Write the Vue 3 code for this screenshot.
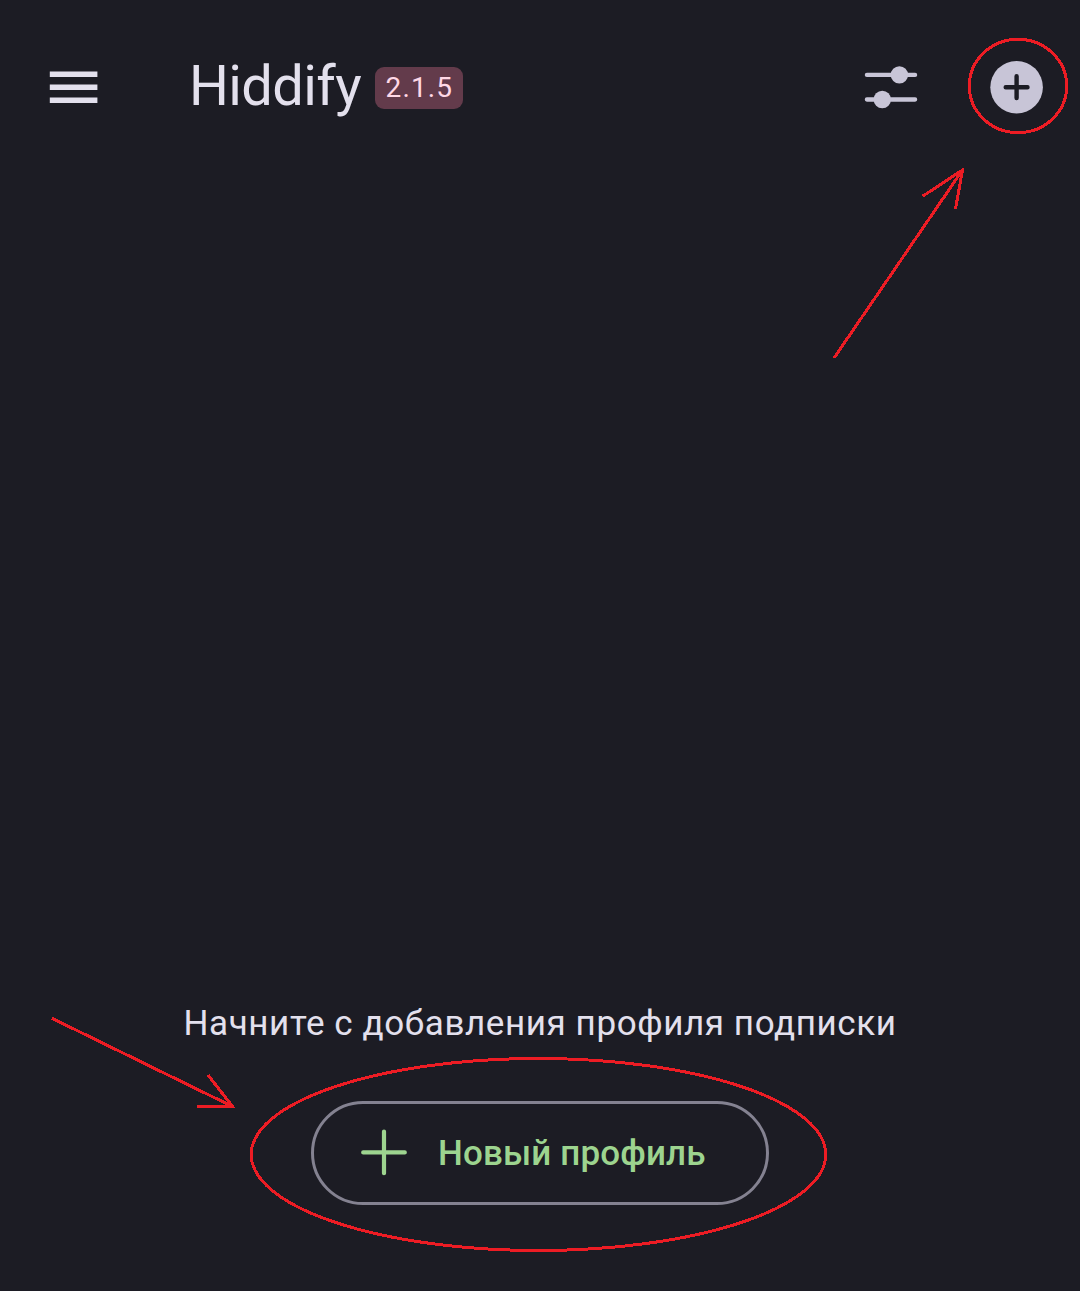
<script setup>
const appName = 'Hiddify'
const version = '2.1.5'
</script>

<template>
  <div class="screen">
    <header class="bar">
      <button class="icon-button menu" aria-label="Меню">
        <svg width="50" height="36" viewBox="0 0 50 36">
          <path d="M1.8 2.4h47.6v5.6H1.8zM1.8 15.4h47.6v5.6H1.8zM1.8 28.4h47.6v5.6H1.8z" />
        </svg>
      </button>
      <h1 class="title">{{ appName }}</h1>
      <span class="version">{{ version }}</span>
      <div class="actions">
        <button class="icon-button" aria-label="Настройки">
          <svg width="56" height="56" viewBox="0 0 56 56">
            <g stroke="currentColor" stroke-width="4.3" stroke-linecap="round">
              <path d="M3.9 15.9h48.2M3.9 40.5h48.2" />
            </g>
            <circle cx="36.4" cy="15.9" r="8.7" />
            <circle cx="19.3" cy="40.5" r="8.7" />
          </svg>
        </button>
        <button class="icon-button" aria-label="Добавить">
          <svg width="56" height="56" viewBox="0 0 56 56">
            <circle cx="27.6" cy="28.2" r="26.3" />
            <path class="cut" d="M16.7 28.2h21.8M27.6 17.3v21.8" />
          </svg>
        </button>
      </div>
    </header>

    <main class="empty">
      <p class="hint">Начните с добавления профиля подписки</p>
      <button class="new-profile">
        <svg width="48" height="48" viewBox="0 0 48 48">
          <path d="M3.2 23.4h41.6M24 2.6v41.6" />
        </svg>
        <span class="label">Новый профиль</span>
      </button>
    </main>

    <svg class="marks" width="1080" height="1291" viewBox="0 0 1080 1291">
      <ellipse cx="1018" cy="86" rx="48.7" ry="46.7" />
      <path d="M834 358L962.5 170M922.5 196.3L962.5 170L955.5 209" />
      <ellipse cx="538.5" cy="1154.5" rx="287.3" ry="96" />
      <path d="M52 1018.3L232.5 1106.5M208 1075L232.5 1106.5H197" />
    </svg>
  </div>
</template>

<style>
body {
  margin: 0;
  background: #1c1c24;
}
</style>

<style scoped>
.screen {
  position: relative;
  box-sizing: border-box;
  width: 1080px;
  height: 1291px;
  display: flex;
  flex-direction: column;
  justify-content: space-between;
  overflow: hidden;
  background: #1c1c24;
  color: #e3e0ed;
  font-family: Roboto, "Noto Sans", sans-serif;
}

button {
  margin: 0;
  padding: 0;
  border: 0;
  background: none;
  font: inherit;
}

svg {
  display: block;
}

.bar {
  display: flex;
  align-items: center;
  height: 174px;
  padding: 0 35px 0 48px;
}

.icon-button {
  color: #c8c5d7;
}

.icon-button svg {
  fill: currentColor;
}

.menu {
  color: #e3e0ed;
}

.title {
  margin: 0 0 3px 91px;
  font-size: 56px;
  font-weight: 400;
  line-height: 70px;
  letter-spacing: -0.6px;
}

.version {
  box-sizing: border-box;
  width: 88px;
  height: 42px;
  margin: 2px 0 0 14.2px;
  border-radius: 9px;
  background: #633b4b;
  color: #ffd8e6;
  font-size: 28px;
  line-height: 41px;
  letter-spacing: 1.1px;
  text-align: center;
}

.actions {
  display: flex;
  gap: 70px;
  margin-left: auto;
}

.cut {
  fill: none;
  stroke: #1c1c24;
  stroke-width: 4.4;
  stroke-linecap: round;
}

.empty {
  display: flex;
  flex-direction: column;
  align-items: center;
  padding-bottom: 86px;
}

.hint {
  margin: 0 0 52px;
  font-size: 35px;
  line-height: 50px;
  letter-spacing: 0.59px;
  white-space: nowrap;
}

.new-profile {
  box-sizing: border-box;
  display: flex;
  align-items: center;
  width: 458px;
  height: 104px;
  padding-left: 46px;
  border: 3px solid #848291;
  border-radius: 52px;
  color: #9dd48f;
}

.new-profile svg {
  fill: none;
  stroke: currentColor;
  stroke-width: 4.2;
  stroke-linecap: round;
}

.label {
  margin: 2px 0 0 30px;
  font-size: 35px;
  font-weight: 500;
  line-height: 50px;
  letter-spacing: 0.15px;
  white-space: nowrap;
}

.marks {
  position: absolute;
  inset: 0;
  fill: none;
  stroke: #ed1c24;
  stroke-width: 3;
  shape-rendering: crispEdges;
  pointer-events: none;
}
</style>
